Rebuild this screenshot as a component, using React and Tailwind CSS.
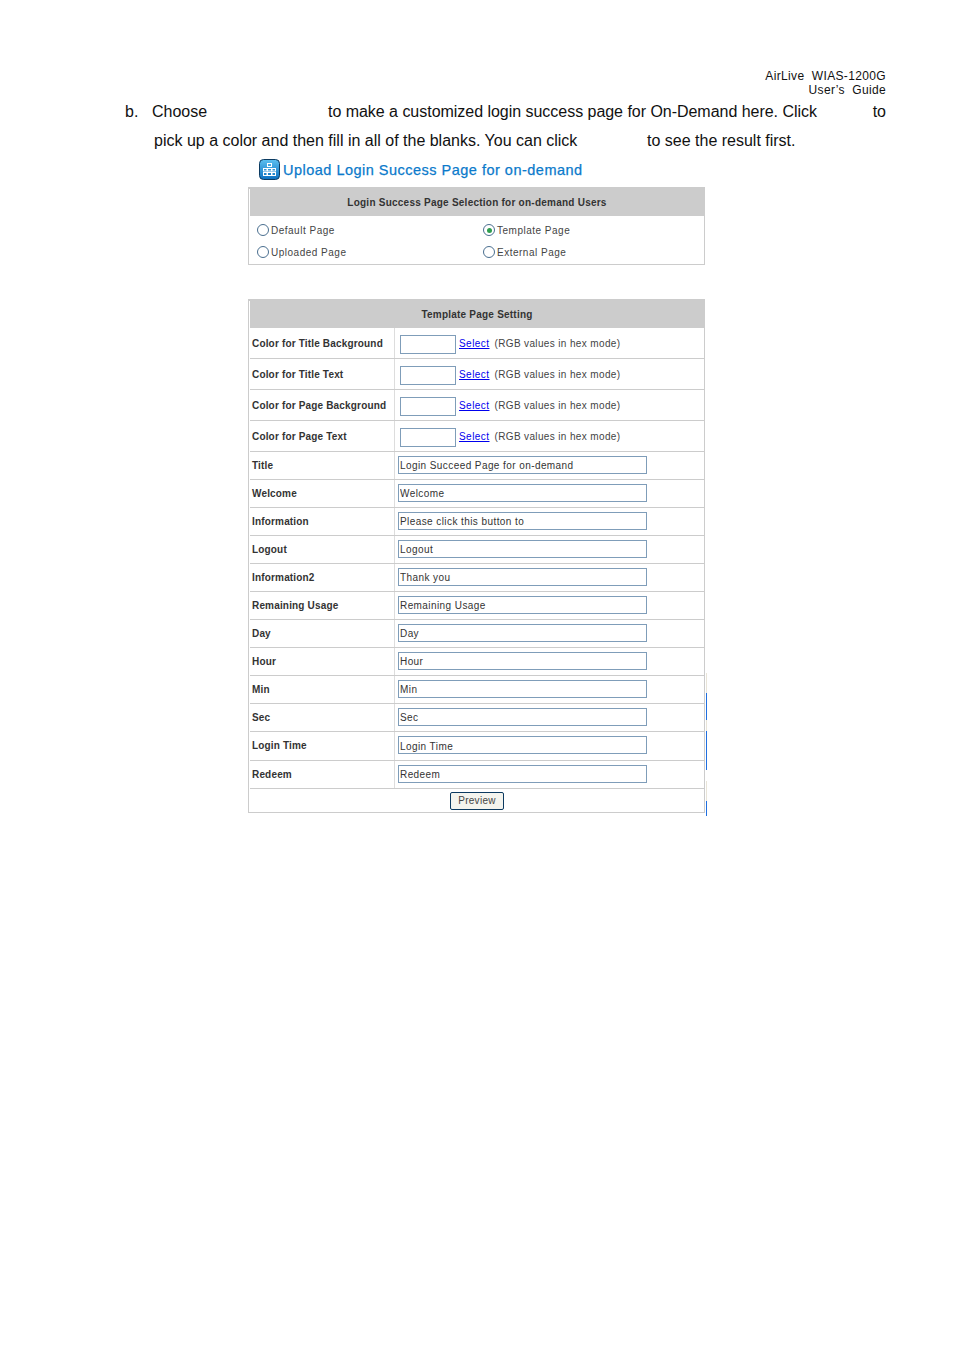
import React from 'react'

const colorRows = [
  'Color for Title Background',
  'Color for Title Text',
  'Color for Page Background',
  'Color for Page Text',
]

const textRows = [
  { label: 'Title', value: 'Login Succeed Page for on-demand', h: 'h-[28px]' },
  { label: 'Welcome', value: 'Welcome', h: 'h-[28px]' },
  { label: 'Information', value: 'Please click this button to', h: 'h-[28px]' },
  { label: 'Logout', value: 'Logout', h: 'h-[28px]' },
  { label: 'Information2', value: 'Thank you', h: 'h-[28px]' },
  { label: 'Remaining Usage', value: 'Remaining Usage', h: 'h-[28px]' },
  { label: 'Day', value: 'Day', h: 'h-[28px]' },
  { label: 'Hour', value: 'Hour', h: 'h-[28px]' },
  { label: 'Min', value: 'Min', h: 'h-[28px]' },
  { label: 'Sec', value: 'Sec', h: 'h-[28px]' },
  { label: 'Login Time', value: 'Login Time', h: 'h-[29px]' },
  { label: 'Redeem', value: 'Redeem', h: 'h-[28px]' },
]

const Radio = ({ label, checked }) => (
  <div className="flex items-center gap-[2px] h-[22px]">
    <span className="-mt-[2px] w-[12px] h-[12px] rounded-full border border-[#4a6f90] bg-white flex items-center justify-center">
      {checked && <span className="w-[5px] h-[5px] rounded-full bg-[#2f9e4f]" />}
    </span>
    <span className="tracking-[0.5px] text-[#444]">{label}</span>
  </div>
)

const Label = ({ children, className = '' }) => (
  <div className={`w-[145px] shrink-0 h-full flex items-center pl-[2px] border-r border-[#ddd] font-bold text-[#333] tracking-[0.17px] ${className}`}>
    {children}
  </div>
)

const App = () => {
  return (
    <div className="relative w-[954px] h-[1350px] bg-white overflow-hidden font-['Liberation_Sans',Arial,sans-serif]">
      {/* page header */}
      <div className="pt-[69px] pr-[68px] text-right text-[12px] leading-[14px] tracking-[0.35px] text-[#111]">
        <div className="whitespace-pre">AirLive  WIAS-1200G</div>
        <div className="whitespace-pre">User’s  Guide</div>
      </div>

      {/* body text */}
      <div className="text-[16px] leading-[29px] text-[#111] pl-[125px] pr-[68px]">
        <div className="flex">
          <span className="w-[27px]">b.</span>
          <span className="w-[176px]">Choose</span>
          <span className="tracking-[-0.03px]">to make a customized login success page for On-Demand here. Click</span>
          <span className="ml-auto">to</span>
        </div>
        <div className="flex pl-[29px]">
          <span className="w-[493px]">pick up a color and then fill in all of the blanks. You can click</span>
          <span>to see the result first.</span>
        </div>
      </div>

      <div className="ml-[248px] w-[457px] text-[10px] leading-none">
        {/* section title */}
        <div className="flex items-center gap-[3px] pl-[11px] h-[22px] mt-[4px]">
          <svg width="21" height="21" viewBox="0 0 21 21" className="shrink-0 self-start">
            <defs>
              <linearGradient id="tile" x1="0" y1="0" x2="0" y2="1">
                <stop offset="0" stopColor="#5cc0f0" />
                <stop offset="1" stopColor="#0a6fc0" />
              </linearGradient>
            </defs>
            <rect x="0.5" y="0.5" width="20" height="20" rx="4" fill="url(#tile)" stroke="#0c3a60" />
            <g fill="none" stroke="#fff" strokeWidth="1">
              <rect x="8.5" y="4.5" width="4" height="3" />
              <rect x="4.5" y="9.5" width="3.5" height="2.5" />
              <rect x="8.5" y="9.5" width="4" height="2.5" />
              <rect x="13" y="9.5" width="3.5" height="2.5" />
              <rect x="4.5" y="13.5" width="3.5" height="3" />
              <rect x="8.5" y="13.5" width="4" height="3" />
              <rect x="13" y="13.5" width="3.5" height="3" />
            </g>
          </svg>
          <span className="text-[14.5px] text-[#0b7acb] tracking-[0.49px] [-webkit-text-stroke:0.25px_#0b7acb] whitespace-nowrap">
            Upload Login Success Page for on-demand
          </span>
        </div>

        {/* page selection box */}
        <div className="mt-[6px] border border-[#ccc] border-t-2 pl-px">
          <div className="h-[27px] bg-[#ccc] flex items-center justify-center font-bold text-[#333] tracking-[0.24px]">
            Login Success Page Selection for on-demand Users
          </div>
          <div className="grid grid-cols-[226px_1fr] pl-[7px] pt-[4px]">
            <Radio label="Default Page" />
            <Radio label="Template Page" checked />
            <Radio label="Uploaded Page" />
            <Radio label="External Page" />
          </div>
        </div>

        {/* template settings */}
        <div className="mt-[34px] border border-[#ccc] border-t-2 pl-px">
          <div className="h-[27px] bg-[#ccc] flex items-center justify-center font-bold text-[#333] tracking-[0.22px]">
            Template Page Setting
          </div>

          {colorRows.map((label) => (
            <div key={label} className="flex items-center h-[31px] border-b border-[#ccc]">
              <Label className="pt-[2px]">{label}</Label>
              <div className="flex items-center pl-[5px] pt-[2px]">
                <input
                  readOnly
                  className="w-[56px] h-[19px] border border-[#7f9db9] bg-white outline-none"
                />
                <a className="ml-[3px] text-[#0000ee] underline tracking-[0.45px]">Select</a>
                <span className="ml-[5px] text-[#444] tracking-[0.36px]">(RGB values in hex mode)</span>
              </div>
            </div>
          ))}

          {textRows.map((row) => (
            <div key={row.label} className={`flex items-center ${row.h} border-b border-[#ccc]`}>
              <Label>{row.label}</Label>
              <div className="pl-[3px] -mt-[2px]">
                <input
                  readOnly
                  value={row.value}
                  className="block w-[249px] h-[18px] px-[1px] pt-[2px] border border-[#7f9db9] bg-white text-[#333] tracking-[0.42px] outline-none"
                />
              </div>
            </div>
          ))}

          <div className="h-[23px] flex items-center justify-center">
            <button className="w-[54px] h-[18px] rounded-[2px] border border-[#0c3a60] bg-[#f4f4ee] text-[#444] text-[10px] tracking-[0.3px]">
              Preview
            </button>
          </div>
        </div>
      </div>

      {/* stray scan marks beside the table */}
      <div className="absolute left-[706px] top-[673px] w-[1px] h-[20px] bg-[#e8e4d8]" />
      <div className="absolute left-[706px] top-[693px] w-[1px] h-[27px] bg-[#1f6fe0]" />
      <div className="absolute left-[706px] top-[720px] w-[1px] h-[11px] bg-[#e8e4d8]" />
      <div className="absolute left-[706px] top-[731px] w-[1px] h-[39px] bg-[#1f6fe0]" />
      <div className="absolute left-[706px] top-[781px] w-[1px] h-[20px] bg-[#e8e4d8]" />
      <div className="absolute left-[706px] top-[801px] w-[1px] h-[15px] bg-[#1f6fe0]" />
    </div>
  )
}

export default App
